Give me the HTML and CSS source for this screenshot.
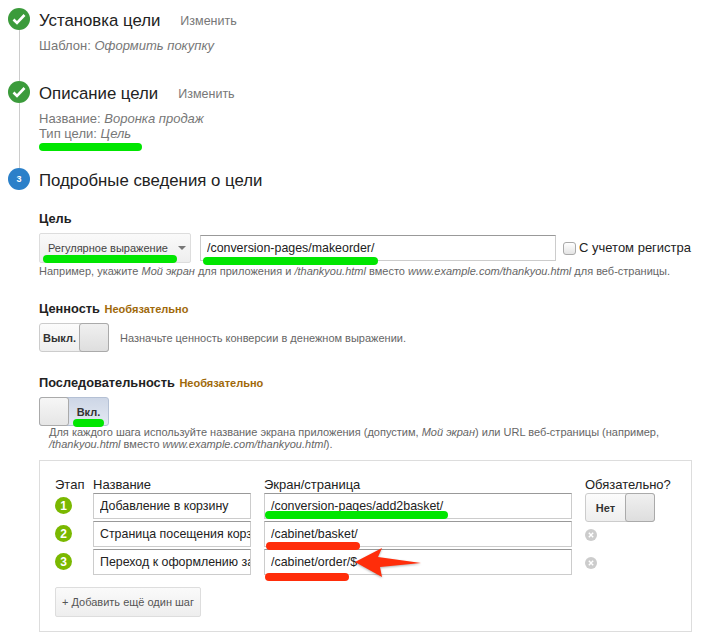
FILE: index.html
```html
<!DOCTYPE html>
<html lang="ru">

<head>
    <meta charset="UTF-8">
    <title>Подробные сведения о цели</title>
    <link rel="stylesheet" href="styles.css">
</head>

<body>
    <div class="step step-one">
        <div class="mark">
            <span class="circle done">
                <svg width="14" height="12" viewBox="0 0 14 12"><path d="M1.5 6.5 5 10 12.5 2" fill="none" stroke="#fff" stroke-width="2.6"/></svg>
            </span>
            <span class="line"></span>
        </div>
        <div class="content">
            <div class="head">
                <h2>Установка цели</h2>
                <a class="edit">Изменить</a>
            </div>
            <p class="detail">Шаблон: <i>Оформить покупку</i></p>
        </div>
    </div>

    <div class="step step-two">
        <div class="mark">
            <span class="circle done">
                <svg width="14" height="12" viewBox="0 0 14 12"><path d="M1.5 6.5 5 10 12.5 2" fill="none" stroke="#fff" stroke-width="2.6"/></svg>
            </span>
            <span class="line"></span>
        </div>
        <div class="content">
            <div class="head">
                <h2>Описание цели</h2>
                <a class="edit">Изменить</a>
            </div>
            <p class="detail">Название: <i>Воронка продаж</i></p>
            <p class="detail">Тип цели: <i>Цель</i></p>
        </div>
    </div>

    <div class="step">
        <div class="mark">
            <span class="circle current">3</span>
        </div>
        <div class="content">
            <div class="head">
                <h2>Подробные сведения о цели</h2>
            </div>

            <h3 class="label label-goal">Цель</h3>
            <div class="goal-row">
                <div class="select">Регулярное выражение<span class="caret"></span></div>
                <input class="field field-url goal-input" type="text" value="/conversion-pages/makeorder/">
                <span class="fake-check"></span>
                <span class="check-text">С учетом регистра</span>
            </div>
            <p class="hint hint-goal">Например, укажите <i>Мой экран</i> для приложения и <i>/thankyou.html</i> вместо <i>www.example.com/thankyou.html</i> для веб-страницы.</p>

            <h3 class="label label-section">Ценность <span class="optional">Необязательно</span></h3>
            <div class="value-row">
                <div class="toggle">
                    <span class="toggle-text">Выкл.</span>
                    <span class="toggle-handle"></span>
                </div>
                <p class="hint">Назначьте ценность конверсии в денежном выражении.</p>
            </div>

            <h3 class="label label-section">Последовательность <span class="optional">Необязательно</span></h3>
            <div class="toggle toggle-on">
                <span class="toggle-handle"></span>
                <span class="toggle-text">Вкл.</span>
            </div>
            <p class="hint hint-funnel">Для каждого шага используйте название экрана приложения (допустим, <i>Мой экран</i>) или URL веб-страницы (например, <i>/thankyou.html</i> вместо <i>www.example.com/thankyou.html</i>).</p>

            <div class="panel">
                <div class="funnel">
                    <span class="col-title">Этап</span>
                    <span class="col-title">Название</span>
                    <span class="col-title">Экран/страница</span>
                    <span class="col-title">Обязательно?</span>

                    <span class="badge">1</span>
                    <input class="field field-name" type="text" value="Добавление в корзину">
                    <input class="field field-url" type="text" value="/conversion-pages/add2basket/">
                    <div class="toggle">
                        <span class="toggle-text">Нет</span>
                        <span class="toggle-handle"></span>
                    </div>

                    <span class="badge">2</span>
                    <input class="field field-name" type="text" value="Страница посещения корзины">
                    <input class="field field-url" type="text" value="/cabinet/basket/">
                    <span class="remove">
                        <svg width="12" height="12" viewBox="0 0 12 12"><circle cx="6" cy="6" r="6" fill="#ccc"/><path d="M3.8 3.8 8.2 8.2M8.2 3.8 3.8 8.2" stroke="#fff" stroke-width="1.4"/></svg>
                    </span>

                    <span class="badge">3</span>
                    <input class="field field-name" type="text" value="Переход к оформлению заказа">
                    <input class="field field-url" type="text" value="/cabinet/order/$">
                    <span class="remove">
                        <svg width="12" height="12" viewBox="0 0 12 12"><circle cx="6" cy="6" r="6" fill="#ccc"/><path d="M3.8 3.8 8.2 8.2M8.2 3.8 3.8 8.2" stroke="#fff" stroke-width="1.4"/></svg>
                    </span>
                </div>
                <button class="add-btn" type="button">+ Добавить ещё один шаг</button>
            </div>
        </div>
    </div>

    <!-- пометки поверх скриншота -->
    <svg class="notes" width="701" height="640" viewBox="0 0 701 640">
        <g fill="#00e600">
            <rect x="39" y="143" width="103" height="8" rx="4"/>
            <rect x="43" y="255" width="134" height="8" rx="4"/>
            <rect x="203" y="257" width="175" height="8" rx="4"/>
            <rect x="73" y="419" width="31" height="8" rx="4"/>
            <rect x="265" y="511" width="183" height="8" rx="4"/>
        </g>
        <g fill="#ff2d0a">
            <rect x="266" y="542" width="94" height="8" rx="4"/>
            <rect x="265" y="573" width="84" height="8" rx="4"/>
            <path class="arrow" d="M355 562 382 548 378 557 421 563 380 567 382 577Z"/>
        </g>
    </svg>
</body>

</html>
```
FILE: styles.css
```css
* {
    box-sizing: border-box;
}

body {
    position: relative;
    margin: 8px;
    color: #222;
    font-family: "Liberation Sans", Arial, sans-serif;
    font-size: 12px;
}

h2,
h3,
p {
    margin: 0;
}

.step {
    display: flex;
    gap: 9px;
}

.step-one .content {
    padding-bottom: 28px;
}

.step-two .content {
    padding-bottom: 27px;
}

.mark {
    display: flex;
    flex: none;
    flex-direction: column;
    align-items: center;
    width: 22px;
}

.line {
    flex: 1;
    width: 1px;
    background: #ccc;
}

.circle {
    display: flex;
    flex: none;
    align-items: center;
    justify-content: center;
    width: 22px;
    height: 22px;
    border-radius: 50%;
}

.done {
    background: #3b9b3b;
}

.current {
    background: #2b80c9;
    color: #fff;
    font-size: 9px;
    font-weight: bold;
}

.content {
    flex: 1;
    min-width: 0;
}

.head {
    display: flex;
    align-items: center;
    gap: 20px;
    height: 22px;
    padding-top: 3px;
}

h2 {
    font-size: 16.8px;
    font-weight: normal;
    color: #222;
}

.edit {
    color: #777;
    font-size: 12.5px;
}

.detail {
    color: #777;
    font-size: 13px;
    line-height: 15px;
}

.head + .detail {
    margin-top: 8px;
}

.label {
    font-size: 12.8px;
    line-height: 14px;
    color: #222;
}

.label-goal {
    margin-top: 22px;
}

.label-section {
    margin-top: 24px;
    margin-bottom: 7px;
}

.optional {
    margin-left: 1px;
    color: #a0690a;
    font-size: 11px;
}

.goal-row {
    display: flex;
    align-items: flex-start;
    margin-top: 7px;
}

.select {
    display: flex;
    align-items: center;
    flex: none;
    width: 152px;
    height: 30px;
    padding-left: 8px;
    border: 1px solid #ddd;
    border-radius: 2px;
    background: linear-gradient(#fafafa, #eee);
    color: #444;
    font-size: 11px;
}

.caret {
    margin-left: 10px;
    border-top: 4px solid #777;
    border-right: 4px solid transparent;
    border-left: 4px solid transparent;
}

.field {
    height: 26px;
    padding: 0 0 0 6px;
    border: 1px solid #ccc;
    border-top-color: #999;
    border-radius: 0;
    outline: none;
    background: #fff;
    color: #222;
    font-family: "Liberation Sans", Arial, sans-serif;
    font-size: 12.4px;
}

.field-name {
    width: 158px;
}

.field-url {
    width: 308px;
}

.goal-input {
    flex: none;
    width: 356px;
    margin: 2px 0 0 9px;
}

.fake-check {
    flex: none;
    width: 13px;
    height: 13px;
    margin: 9px 3px 0 7px;
    border: 1px solid #aaa;
    border-radius: 3px;
    background: linear-gradient(#fff, #e4e4e4);
}

.check-text {
    margin-top: 7px;
    font-size: 13px;
    line-height: 16px;
    white-space: nowrap;
}

.hint {
    color: #666;
    font-size: 11px;
    line-height: 14px;
}

.hint-goal {
    margin-top: 1px;
}

.value-row {
    display: flex;
    align-items: center;
    gap: 11px;
}

.toggle {
    display: flex;
    flex: none;
    width: 70px;
    height: 29px;
    border: 1px solid #ccc;
    border-radius: 3px;
    background: linear-gradient(#fcfcfc, #eee);
}

.toggle-text {
    flex: 1;
    align-self: center;
    color: #333;
    font-size: 11px;
    font-weight: bold;
    text-align: center;
}

.toggle-handle {
    flex: none;
    width: 30px;
    margin: -1px -1px -1px 0;
    border: 1px solid #aaa;
    border-radius: 3px;
    background: linear-gradient(#f0f0f0, #dedede);
}

.toggle-on {
    border-color: #b4c0d4;
    background: linear-gradient(#cdd6e6, #e4e9f2);
}

.toggle-on .toggle-handle {
    margin: -1px 0 -1px -1px;
    background: linear-gradient(#f6f6f6, #e6e6e6);
}

.hint-funnel {
    margin-left: 10px;
    line-height: 12px;
}

.panel {
    width: 653px;
    margin-top: 10px;
    padding: 16px 15px 14px;
    border: 1px solid #ddd;
}

.funnel {
    display: grid;
    grid-template-columns: 38px 171px 321px 70px;
    grid-template-rows: 14px 26px 26px 26px;
    row-gap: 2px;
    align-items: start;
}

.col-title {
    margin-bottom: -2px;
    padding-top: 1px;
    font-size: 13px;
    line-height: 14px;
    white-space: nowrap;
}

.badge {
    display: flex;
    align-items: center;
    justify-content: center;
    width: 17px;
    height: 17px;
    margin-top: 4px;
    border-radius: 50%;
    background: #7ab800;
    color: #fff;
    font-size: 12px;
    font-weight: bold;
}

.remove {
    display: block;
    height: 12px;
    margin-top: 8px;
    line-height: 0;
}

.add-btn {
    display: block;
    width: 146px;
    height: 30px;
    margin-top: 12px;
    padding: 0;
    border: 1px solid #ddd;
    border-radius: 2px;
    background: linear-gradient(#fafafa, #eee);
    color: #555;
    font-family: "Liberation Sans", Arial, sans-serif;
    font-size: 11px;
}

.notes {
    position: absolute;
    top: -8px;
    left: -8px;
    pointer-events: none;
}

.arrow {
    filter: drop-shadow(0 1px 1px rgba(0, 0, 0, 0.3));
}
```
